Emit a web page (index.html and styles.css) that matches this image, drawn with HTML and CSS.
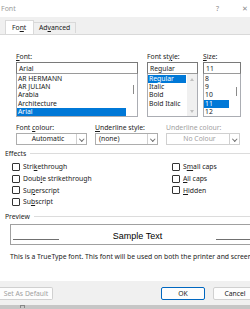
FILE: index.html
```html
<!DOCTYPE html>
<html lang="en">
  <head>
    <meta charset="UTF-8" />
    <title>Font</title>
    <link rel="stylesheet" href="styles.css">
  </head>
  <body>
    <!-- Title bar -->
    <div class="titlebar">
      <span class="title">Font</span>
      <span class="help">?</span>
      <span class="close">✕</span>
    </div>

    <!-- Tabs -->
    <div class="tabs">
      <div class="tab active">Fo<u>n</u>t</div>
      <div class="tab">Ad<u>v</u>anced</div>
    </div>

    <!-- Tab page -->
    <div class="page">
      <div class="pickers">
        <div class="col col-font">
          <div class="label"><u>F</u>ont:</div>
          <div class="field">Arial</div>
          <div class="list">
            <div class="item">AR HERMANN</div>
            <div class="item">AR JULIAN</div>
            <div class="item">Arabia</div>
            <div class="item">Architecture</div>
            <div class="item selected">Arial</div>
            <div class="thumb"></div>
          </div>
        </div>
        <div class="col col-style">
          <div class="label">Font st<u>y</u>le:</div>
          <div class="field">Regular</div>
          <div class="list">
            <div class="item selected">Regular</div>
            <div class="item">Italic</div>
            <div class="item">Bold</div>
            <div class="item">Bold Italic</div>
            <div class="scrollbar">
              <span class="arrow up"></span>
              <span class="arrow down"></span>
            </div>
          </div>
        </div>
        <div class="col col-size">
          <div class="label"><u>S</u>ize:</div>
          <div class="field">11</div>
          <div class="list">
            <div class="item">8</div>
            <div class="item">9</div>
            <div class="item">10</div>
            <div class="item selected">11</div>
            <div class="item">12</div>
            <div class="thumb"></div>
          </div>
        </div>
      </div>

      <div class="drops">
        <div class="drop drop-colour">
          <div class="label">Font <u>c</u>olour:</div>
          <div class="select center"><span class="value">Automatic</span><span class="caret"></span></div>
        </div>
        <div class="drop drop-underline">
          <div class="label"><u>U</u>nderline style:</div>
          <div class="select"><span class="value">(none)</span><span class="caret"></span></div>
        </div>
        <div class="drop drop-ucolour disabled">
          <div class="label">Underline colour:</div>
          <div class="select center"><span class="value">No Colour</span><span class="caret"></span></div>
        </div>
      </div>

      <div class="group-title">Effects</div>
      <div class="effects">
        <label class="check"><span class="box"></span>Stri<u>k</u>ethrough</label>
        <label class="check"><span class="box"></span>S<u>m</u>all caps</label>
        <label class="check"><span class="box"></span>Doub<u>l</u>e strikethrough</label>
        <label class="check"><span class="box"></span><u>A</u>ll caps</label>
        <label class="check"><span class="box"></span>Su<u>p</u>erscript</label>
        <label class="check"><span class="box"></span><u>H</u>idden</label>
        <label class="check"><span class="box"></span>Su<u>b</u>script</label>
      </div>

      <div class="group-title">Preview</div>
      <div class="preview">
        <span class="rule"></span>
        <span class="sample">Sample Text</span>
        <span class="rule"></span>
      </div>
      <p class="note">This is a TrueType font. This font will be used on both the printer and screen.</p>
    </div>

    <!-- Footer buttons -->
    <div class="footer">
      <button class="btn btn-default" disabled>Set As Default</button>
      <span class="spacer"></span>
      <button class="btn btn-ok">OK</button>
      <button class="btn btn-cancel">Cancel</button>
    </div>

    <!-- Word window behind the dialog -->
    <div class="under"><span class="under-box"></span></div>
  </body>
</html>
```

FILE: styles.css
```css
/* General styles */
body {
    margin: 0;
    width: 250px;
    height: 309px;
    overflow: hidden;
    background: #f0f0f0;
    font-family: "Noto Sans", "Open Sans", sans-serif;
    font-size: 6.8px;
    color: #1a1a1a;
}

u {
    text-decoration-thickness: 0.5px;
    text-underline-offset: 1px;
}

/* Title bar */
.titlebar {
    height: 17px;
    background: #fff;
    display: flex;
    align-items: center;
    padding-left: 1px;
    color: #9a9a9a;
    font-size: 7px;
}

.titlebar .title {
    flex: 1;
}

.titlebar .help {
    width: 10px;
    margin-right: 16px;
    color: #8a8a8a;
}

.titlebar .close {
    width: 8px;
    color: #8a8a8a;
    font-size: 7px;
}

/* Tabs */
.tabs {
    height: 17px;
    display: flex;
    align-items: flex-end;
    padding-left: 5px;
}

.tab {
    height: 11px;
    line-height: 11px;
    padding: 0 6px;
    border: 1px solid #d9d9d9;
    border-bottom: none;
    color: #1a1a1a;
}

.tab.active {
    height: 13px;
    line-height: 13px;
    background: #fff;
    width: 15px;
}

.tab + .tab {
    border-left: none;
    margin-bottom: 1px;
    height: 10px;
    line-height: 10px;
    padding: 0 5px;
}

/* Tab page */
.page {
    background: #fff;
    border-top: 1px solid #d9d9d9;
    height: 247px;
    width: 262px;
    padding-top: 17px;
    box-sizing: border-box;
}

.label {
    height: 9px;
    line-height: 9px;
    margin-bottom: 1px;
}

/* Font / style / size pickers */
.pickers {
    display: flex;
    padding-left: 16px;
}

.col-font {
    width: 122px;
    margin-right: 9px;
}

.col-style {
    width: 51px;
    margin-right: 5px;
}

.col-size {
    width: 38px;
}

.field {
    height: 12px;
    line-height: 11px;
    border: 1px solid #7a7a7a;
    border-bottom-color: #9a9a9a;
    padding-left: 2px;
    box-sizing: border-box;
}

.list {
    position: relative;
    height: 43px;
    border: 1px solid #abadb3;
    border-top: none;
    box-sizing: border-box;
    padding-top: 0.5px;
}

.item {
    height: 8.4px;
    line-height: 8.4px;
    padding-left: 1px;
    margin-right: 11px;
}

.item.selected {
    background: #0078d7;
    color: #fff;
}

/* Thin overlay scrollbar thumb */
.thumb {
    position: absolute;
    right: 3px;
    top: 11px;
    width: 1.5px;
    height: 9px;
    background: #8a8a8a;
}

.col-size .thumb {
    top: 13px;
}

/* Disabled classic scrollbar in the style list */
.scrollbar {
    position: absolute;
    top: 0;
    right: 0;
    width: 10px;
    height: 100%;
    background: #f0f0f0;
}

.arrow {
    position: absolute;
    left: 3px;
    width: 0;
    height: 0;
    border-left: 2.5px solid transparent;
    border-right: 2.5px solid transparent;
}

.arrow.up {
    top: 4px;
    border-bottom: 3px solid #c0c0c0;
}

.arrow.down {
    bottom: 3px;
    border-top: 3px solid #c0c0c0;
}

/* Colour and underline drop-downs */
.drops {
    display: flex;
    padding-left: 16px;
    margin-top: 6px;
}

.drop-colour {
    width: 71px;
    margin-right: 8px;
}

.drop-underline {
    width: 63px;
    margin-right: 8px;
}

.drop-ucolour {
    width: 74px;
}

.select {
    display: flex;
    height: 12px;
    line-height: 10px;
    border: 1px solid #adadad;
    box-sizing: border-box;
}

.select .value {
    flex: 1;
    padding-left: 3px;
}

.select.center .value {
    text-align: center;
}

.select .caret {
    width: 9px;
    border-left: 1px solid #d0d0d0;
    position: relative;
}

.select .caret::after {
    content: "";
    position: absolute;
    left: 2.5px;
    top: 2.5px;
    width: 2.5px;
    height: 2.5px;
    border-right: 0.8px solid #707070;
    border-bottom: 0.8px solid #707070;
    transform: rotate(45deg);
}

.disabled {
    color: #a0a0a0;
}

.disabled .select {
    border-color: #d0d0d0;
}

/* Group titles with a rule */
.group-title {
    display: flex;
    align-items: center;
    height: 9px;
    line-height: 9px;
    padding-left: 5px;
    margin-top: 4px;
}

.group-title::after {
    content: "";
    flex: 1;
    height: 1px;
    background: #dcdcdc;
    margin-left: 4px;
}

/* Effects check boxes */
.effects {
    display: grid;
    grid-template-columns: 160px 1fr;
    grid-auto-rows: 11.7px;
    padding-left: 12px;
    margin-top: 3px;
}

.check {
    display: flex;
    align-items: center;
}

.box {
    width: 6px;
    height: 6px;
    border: 0.8px solid #333;
    border-radius: 1px;
    margin-right: 3px;
}

/* Preview */
.preview {
    display: flex;
    align-items: flex-end;
    height: 21px;
    margin: 3px 0 0 10px;
    border: 1px solid #a0a0a0;
    border-right: none;
    box-sizing: border-box;
    padding: 0 0 3px 2px;
}

.rule {
    width: 46px;
    height: 1px;
    background: #707070;
    margin-bottom: 0.5px;
}

.sample {
    flex: 1;
    text-align: center;
    font-family: "Liberation Sans", Arial, sans-serif;
    font-size: 9px;
    line-height: 9px;
    color: #000;
}

.note {
    margin: 7px 0 0 10px;
    line-height: 9px;
    white-space: nowrap;
}

/* Footer */
.footer {
    display: flex;
    height: 23px;
    padding-top: 6px;
    box-sizing: border-box;
    align-items: flex-start;
}

.btn {
    height: 13px;
    padding: 0;
    font-family: inherit;
    font-size: 6.8px;
    background: #fdfdfd;
    border: 1px solid #d0d0d0;
    border-radius: 2px;
    color: #1a1a1a;
}

.btn-default {
    width: 53px;
    color: #a0a0a0;
    border-left: none;
    border-radius: 0 2px 2px 0;
}

.spacer {
    flex: 1;
}

.btn-ok {
    width: 44px;
    border: 1px solid #0067c0;
    margin-right: 8px;
}

.btn-cancel {
    width: 44px;
    margin-right: -7px;
    flex-shrink: 0;
}

/* Window behind */
.under {
    height: 4px;
    background: #c6c6c6;
    padding-left: 20px;
}

.under-box {
    display: block;
    width: 5px;
    height: 3px;
    margin-top: 1px;
    border: 1px solid #888;
    border-bottom: none;
    box-sizing: border-box;
}
```
